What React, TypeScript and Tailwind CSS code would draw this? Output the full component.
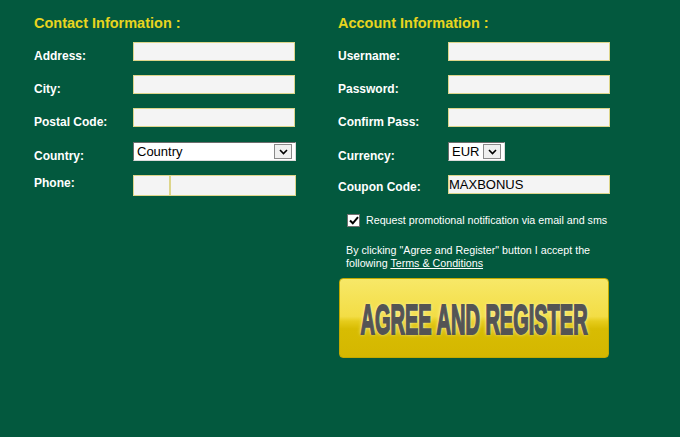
import React from 'react'

// Поле ввода с жёлтой рамкой
function Field({ className = '', value = '' }: { className?: string; value?: string }) {
  return (
    <div className={`h-[19px] border border-[#ddd58a] bg-[#f4f4f4] text-[13px] leading-[17px] text-black ${className}`}>
      {value}
    </div>
  )
}

function Chevron() {
  return (
    <svg width="9" height="6" viewBox="0 0 9 6">
      <path d="M1 1 L4.5 4.5 L8 1" fill="none" stroke="#000" strokeWidth="1.6" />
    </svg>
  )
}

function SelectBox({ label, className = '' }: { label: string; className?: string }) {
  return (
    <div className={`flex h-[19px] items-center justify-between border-t border-l border-[#6d6d6d] border-r border-b border-r-[#dcdcdc] border-b-[#dcdcdc] bg-white pl-[3px] pr-[3px] ${className}`}>
      <span className="text-[13px] leading-none text-black">{label}</span>
      <span className="flex h-[15px] w-[18px] items-center justify-center border border-[#8a8a8a] bg-[#f0f0f0]">
        <Chevron />
      </span>
    </div>
  )
}

function Row({ label, h, mt, labelW, children }: { label: string; h: string; mt: string; labelW: string; children: React.ReactNode }) {
  return (
    <div className={`flex items-start ${h}`}>
      <div className={`${labelW} ${mt} shrink-0 text-[12px] font-bold leading-[14px] text-white`}>{label}</div>
      {children}
    </div>
  )
}

export default function App() {
  return (
    <div className="flex h-[437px] w-[680px] bg-[#03593e] font-['Liberation_Sans',Arial,sans-serif]">
      {/* Контактная информация */}
      <div className="w-[338px] shrink-0 pl-[34px] pt-[14px]">
        <h2 className="mb-[10px] text-[14.5px] font-bold leading-[18px] text-[#e8d51e]">Contact Information :</h2>
        <Row label="Address:" h="h-[33px]" mt="mt-[7px]" labelW="w-[99px]"><Field className="w-[162px]" /></Row>
        <Row label="City:" h="h-[33px]" mt="mt-[7px]" labelW="w-[99px]"><Field className="w-[162px]" /></Row>
        <Row label="Postal Code:" h="h-[34px]" mt="mt-[7px]" labelW="w-[99px]"><Field className="w-[162px]" /></Row>
        <Row label="Country:" h="h-[33px]" mt="mt-[7px]" labelW="w-[99px]"><SelectBox label="Country" className="w-[163px]" /></Row>
        <Row label="Phone:" h="h-[33px]" mt="mt-[1px]" labelW="w-[99px]">
          <div className="flex">
            <div className="h-[21px] w-[37px] border border-[#ddd58a] bg-[#f4f4f4]" />
            <div className="h-[21px] w-[126px] border border-[#ddd58a] bg-[#f4f4f4]" />
          </div>
        </Row>
      </div>

      {/* Аккаунт */}
      <div className="w-[300px] pt-[14px]">
        <h2 className="mb-[10px] text-[14.5px] font-bold leading-[18px] text-[#e8d51e]">Account Information :</h2>
        <Row label="Username:" h="h-[33px]" mt="mt-[7px]" labelW="w-[110px]"><Field className="w-[162px]" /></Row>
        <Row label="Password:" h="h-[33px]" mt="mt-[7px]" labelW="w-[110px]"><Field className="w-[162px]" /></Row>
        <Row label="Confirm Pass:" h="h-[34px]" mt="mt-[7px]" labelW="w-[110px]"><Field className="w-[162px]" /></Row>
        <Row label="Currency:" h="h-[33px]" mt="mt-[7px]" labelW="w-[110px]"><SelectBox label="EUR" className="w-[57px]" /></Row>
        <Row label="Coupon Code:" h="h-[39px]" mt="mt-[5px]" labelW="w-[110px]"><Field className="w-[162px]" value="MAXBONUS" /></Row>

        <div className="flex items-center pl-[9px] text-[10.7px] leading-[13px] text-white">
          <span className="mr-[6px] flex h-[13px] w-[13px] items-center justify-center border border-[#707070] bg-white">
            <svg width="10" height="9" viewBox="0 0 10 9">
              <path d="M1 4.5 L3.8 7.3 L9 1.2" fill="none" stroke="#000" strokeWidth="2" />
            </svg>
          </span>
          Request promotional notification via email and sms
        </div>

        <p className="mt-[17px] pl-[8px] text-[10.7px] leading-[12.5px] text-white">
          By clicking "Agree and Register" button I accept the
          <br />
          following <span className="underline">Terms &amp; Conditions</span>
        </p>

        <button className="mt-[9px] ml-[1px] flex h-[80px] w-[270px] items-center justify-center overflow-hidden rounded-[4px] border border-[#c2a900] bg-[linear-gradient(to_bottom,#f7e868_0%,#f3dd45_48%,#e6cc1c_54%,#d8bc02_64%,#d4b700_100%)]">
          <span className="mt-[2px] inline-block scale-x-[0.465] whitespace-nowrap text-[43px] font-bold leading-none text-[#545454] [-webkit-text-stroke:2px_#545454] [text-shadow:0_0_6px_#fff6b0,0_0_3px_#fff]">
            AGREE AND REGISTER
          </span>
        </button>
      </div>
    </div>
  )
}
